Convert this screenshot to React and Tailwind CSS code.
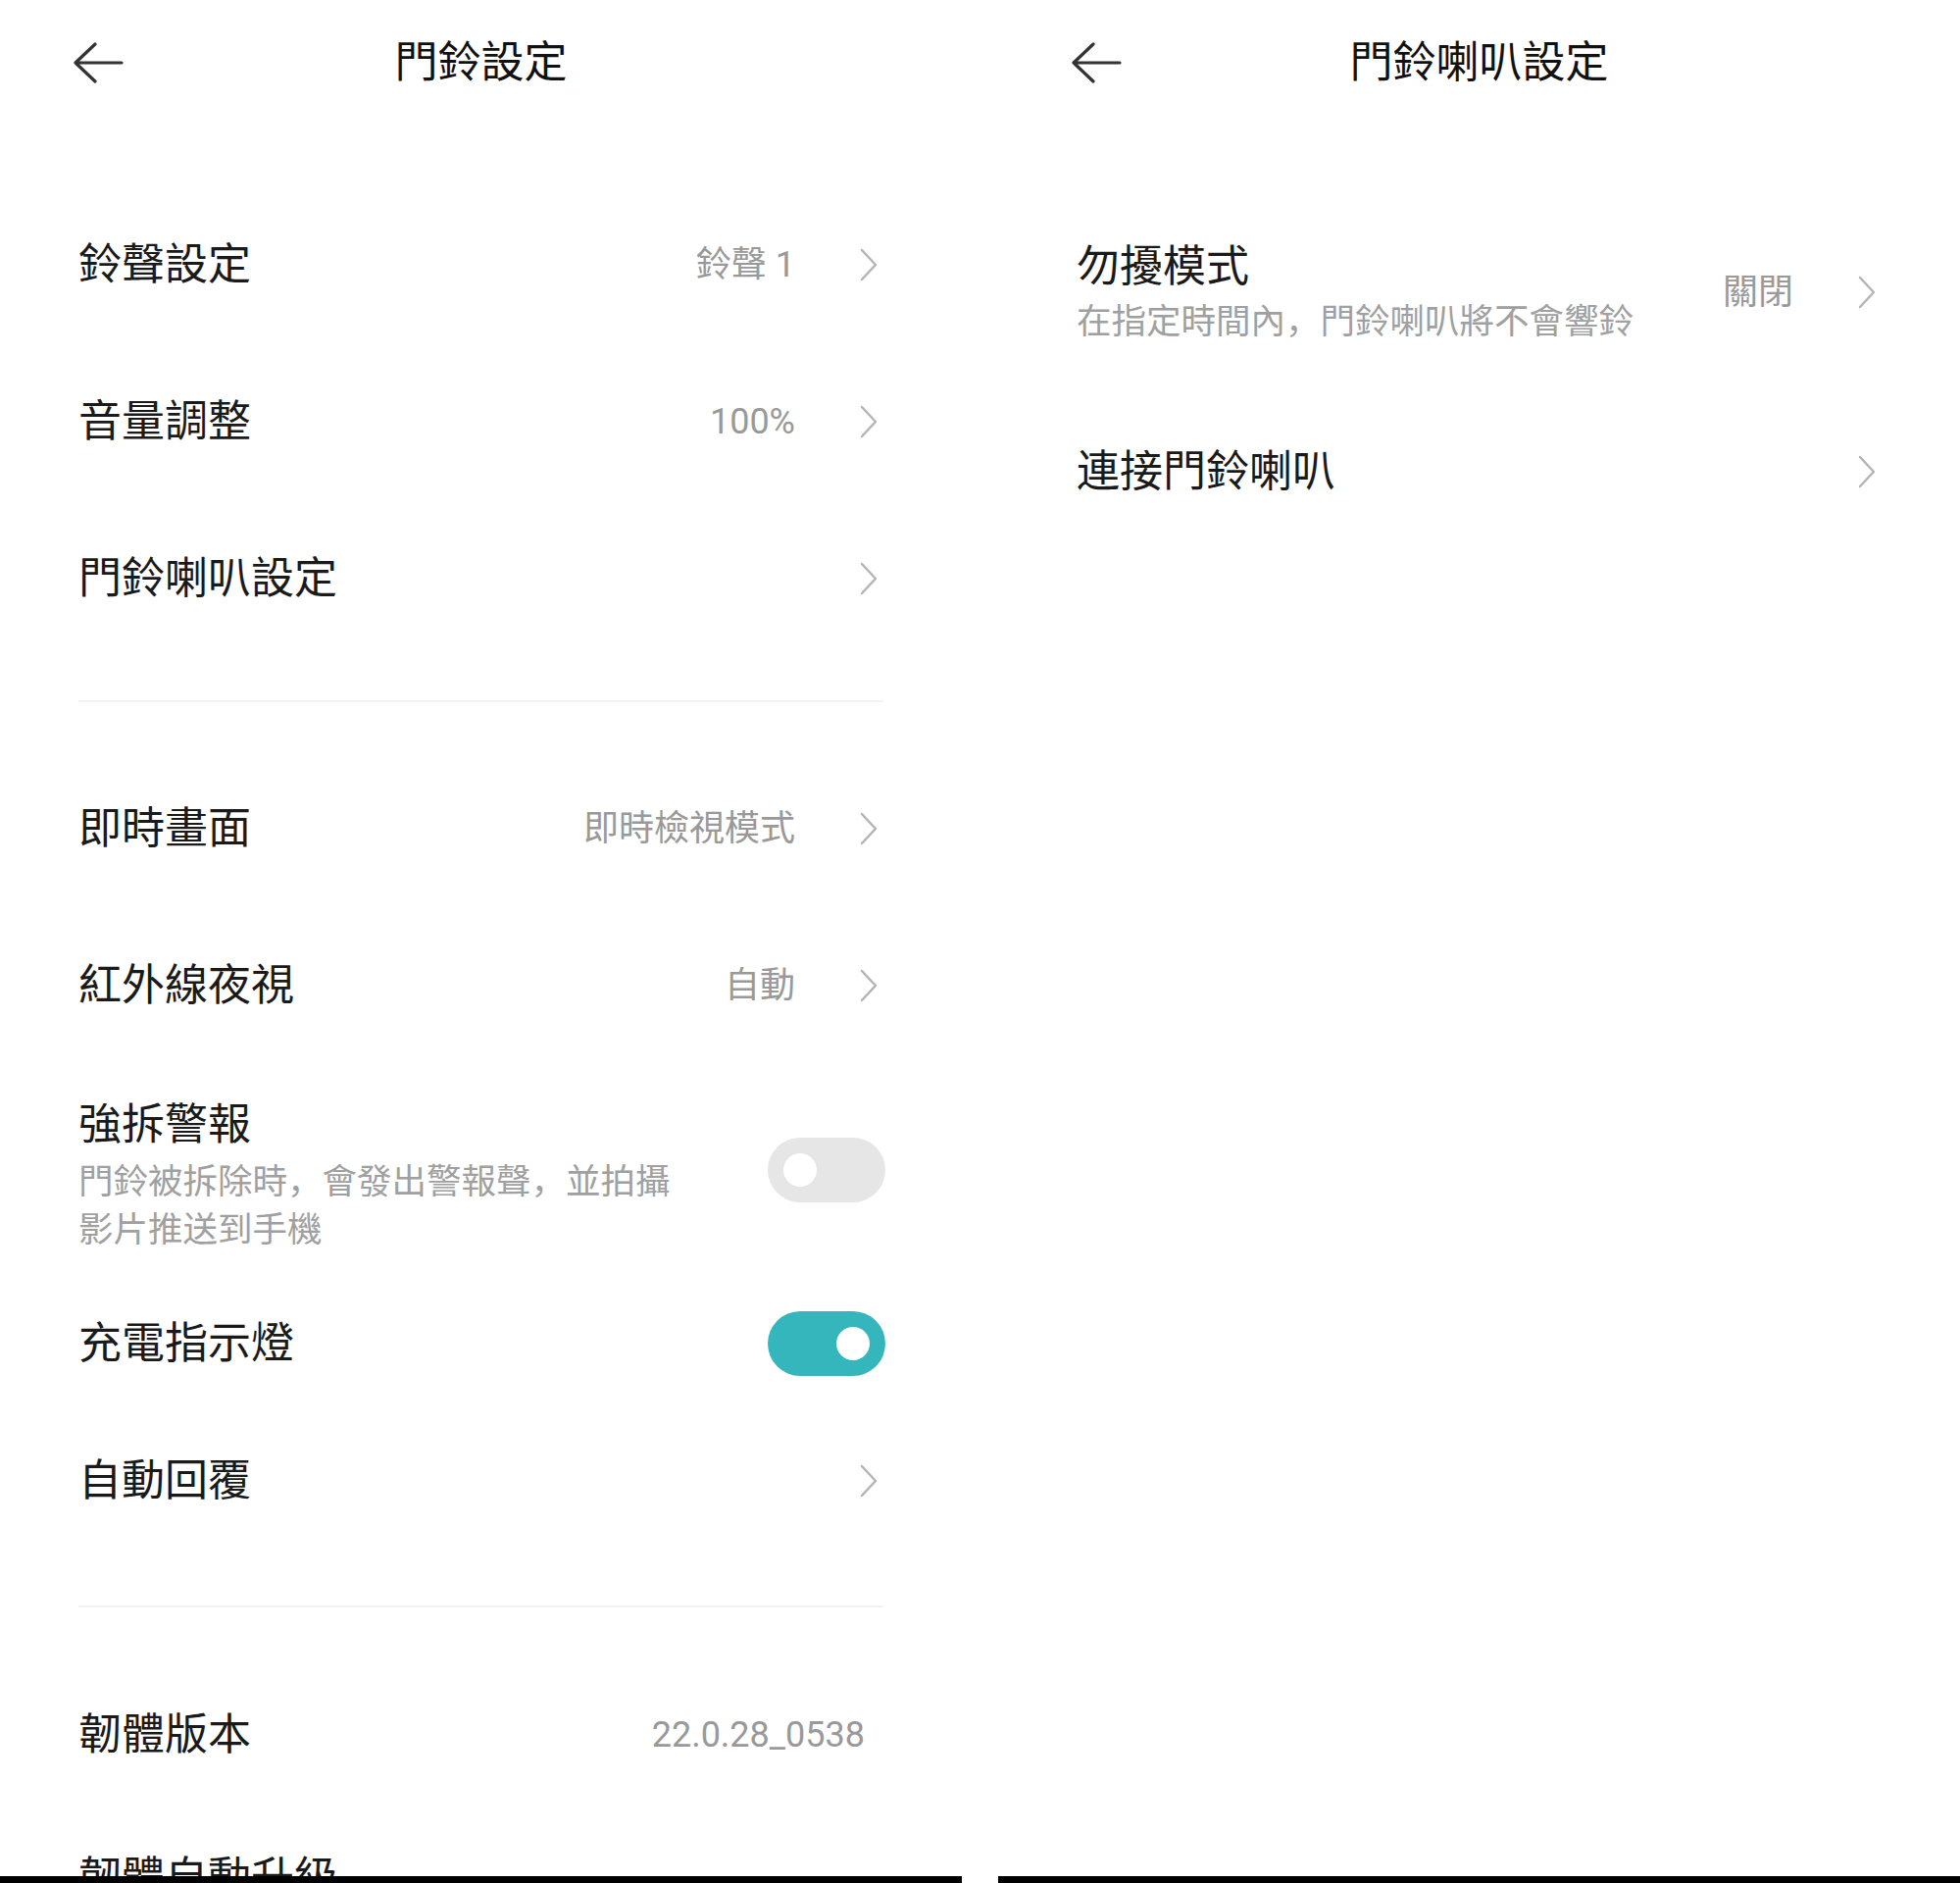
import React from 'react';

const FONT = "font-['Roboto','Noto_Sans_CJK_SC',sans-serif]";

const BackArrow = () => (
  <svg width="52" height="42" viewBox="0 0 52 42" fill="none" stroke="#333333" strokeWidth="3.2" strokeLinecap="round" strokeLinejoin="round">
    <path d="M23 2 L3 21 L23 40 M3 21 H50" />
  </svg>
);

const Chevron = () => (
  <svg width="20" height="34" viewBox="0 0 20 34" fill="none" stroke="#b3b3b3" strokeWidth="2.4" strokeLinecap="round" strokeLinejoin="round" className="mr-[5px] shrink-0">
    <path d="M3 2 L17 17 L3 32" />
  </svg>
);

const Toggle = ({ on }) => (
  <div
    className={
      on
        ? 'w-[120px] h-[66px] rounded-full bg-[#35b6bd] flex items-center justify-end pr-[16px] shrink-0 -mr-[2px]'
        : 'w-[120px] h-[66px] rounded-full bg-[#e6e6e6] flex items-center pl-[16px] shrink-0 -mr-[2px] mb-[11px]'
    }
  >
    <div className="w-[34px] h-[34px] rounded-full bg-white" />
  </div>
);

// simple one-line row
const Row = ({ label, value, chevron = true, h = 'h-[160px]' }) => (
  <div className={`${h} flex items-center px-[80px]`}>
    <div className="flex-1 text-[44px] leading-[60px] text-[#1a1a1a]">{label}</div>
    {value && (
      <div className={chevron ? 'text-[36px] text-[#999999] mr-[65px]' : 'text-[36px] text-[#999999] mr-[19px]'}>
        {value}
      </div>
    )}
    {chevron && <Chevron />}
  </div>
);

const Divider = ({ className }) => (
  <div className={className}>
    <div className="mx-[80px] h-[2px] bg-[#f2f2f2]" />
  </div>
);

const Header = ({ title }) => (
  <div className="h-[128px] grid grid-cols-[1fr_auto_1fr] items-center">
    <div className="pl-[74px] flex items-center">
      <BackArrow />
    </div>
    <div className="text-[44px] leading-[60px] text-[#111111]">{title}</div>
    <div />
  </div>
);

const DoorbellSettings = () => (
  <div className="w-[981px] h-[1920px] flex flex-col bg-white">
    <div className="flex-1 overflow-hidden">
      <Header title="門鈴設定" />
      <div className="h-[62px]" />
      <Row label="鈴聲設定" value="鈴聲 1" />
      <Row label="音量調整" value="100%" />
      <Row label="門鈴喇叭設定" />
      <Divider className="pt-[44px] pb-[49px]" />
      <Row label="即時畫面" value="即時檢視模式" />
      <Row label="紅外線夜視" value="自動" />

      <div className="flex items-center px-[80px] py-[32px]">
        <div className="flex-1">
          <div className="text-[44px] leading-[60px] text-[#1a1a1a]">強拆警報</div>
          <div className="mt-[4px] max-w-[625px] text-[35.5px] leading-[49px] text-[#a0a0a0]">
            門鈴被拆除時，會發出警報聲，並拍攝影片推送到手機
          </div>
        </div>
        <Toggle on={false} />
      </div>

      <div className="h-[118px] flex items-center px-[80px]">
        <div className="flex-1 text-[44px] leading-[60px] text-[#1a1a1a]">充電指示燈</div>
        <Toggle on />
      </div>

      <Row label="自動回覆" h="h-[162px]" />
      <Divider className="pt-[46px] pb-[50px]" />
      <Row label="韌體版本" value="22.0.28_0538" chevron={false} />
      <Row label="韌體自動升級" chevron={false} h="h-[132px]" />
    </div>
    <div className="h-[7px] bg-black" />
  </div>
);

const SpeakerSettings = () => (
  <div className="w-[981px] h-[1920px] flex flex-col bg-white">
    <div className="flex-1 overflow-hidden">
      <Header title="門鈴喇叭設定" />
      <div className="h-[62px]" />
      <div className="flex items-center px-[80px] pt-[52px] pb-[48px]">
        <div className="flex-1">
          <div className="text-[44px] leading-[60px] text-[#1a1a1a]">勿擾模式</div>
          <div className="mt-[2px] text-[35.5px] leading-[49px] text-[#a0a0a0]">
            在指定時間內，門鈴喇叭將不會響鈴
          </div>
        </div>
        <div className="text-[36px] text-[#999999] mr-[65px]">關閉</div>
        <Chevron />
      </div>
      <Row label="連接門鈴喇叭" />
    </div>
    <div className="h-[7px] bg-black" />
  </div>
);

export default function App() {
  return (
    <div className={`${FONT} w-[1999px] h-[1920px] flex bg-white overflow-hidden`}>
      <DoorbellSettings />
      <div className="w-[37px] shrink-0" />
      <SpeakerSettings />
    </div>
  );
}
